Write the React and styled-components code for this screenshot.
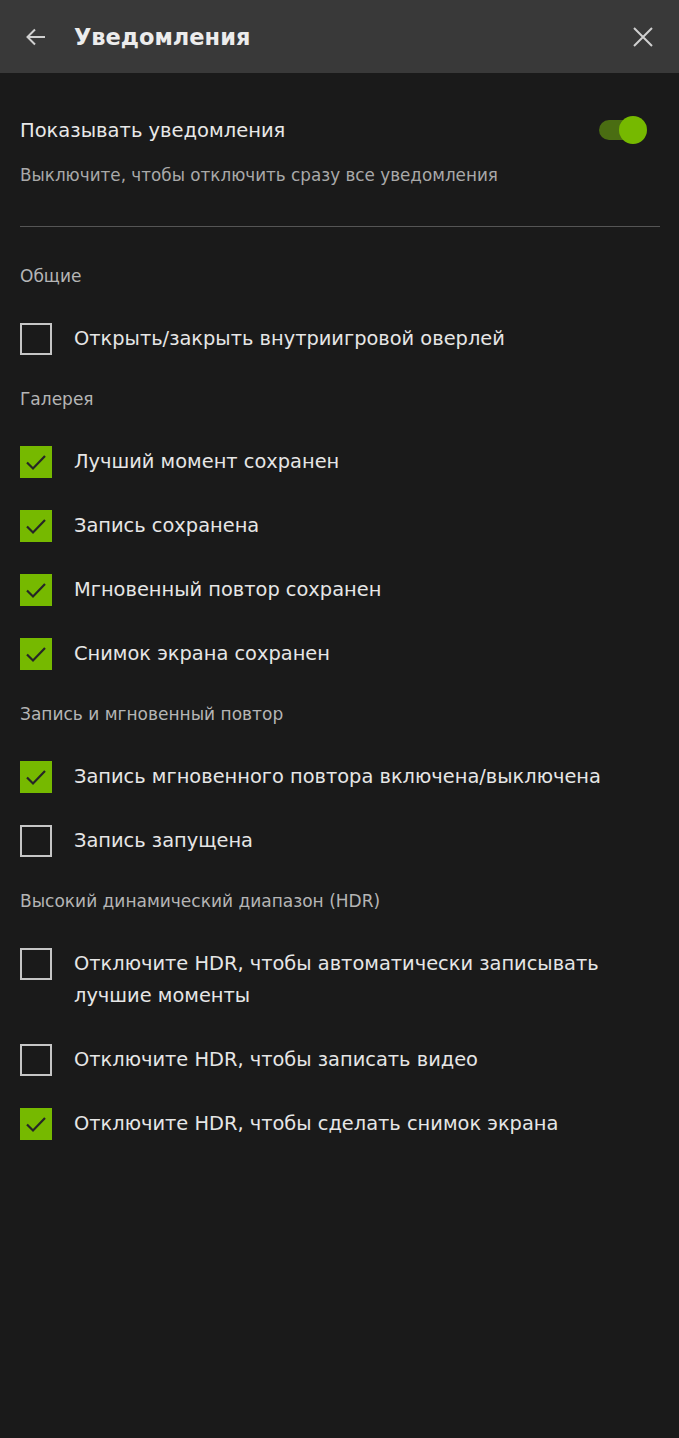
import React, { useState } from 'react';
import styled, { createGlobalStyle } from 'styled-components';

const GlobalStyle = createGlobalStyle`
  html, body {
    margin: 0;
    padding: 0;
    background: #1a1a1a;
  }
  body {
    font-family: "DejaVu Sans", "Roboto", sans-serif;
  }
`;

const Page = styled.div`
  width: 679px;
  min-height: 1438px;
  background: #1a1a1a;
  color: #e8e8e8;
  display: flex;
  flex-direction: column;
`;

const Header = styled.div`
  height: 73px;
  background: #393939;
  display: flex;
  align-items: center;
  padding: 0 24px;
  box-sizing: border-box;
`;

const IconButton = styled.button`
  background: none;
  border: none;
  padding: 0;
  width: 24px;
  height: 24px;
  display: flex;
  align-items: center;
  justify-content: center;
  color: #d0d0d0;
  cursor: pointer;
`;

const Title = styled.h1`
  margin: 0 0 0 26px;
  flex: 1;
  font-size: 22.5px;
  font-weight: 700;
  color: #ececec;
`;

const Content = styled.div`
  padding: 42px 19px 0 20px;
  display: flex;
  flex-direction: column;
`;

const MasterRow = styled.div`
  height: 30px;
  display: flex;
  align-items: center;
  justify-content: space-between;
  font-size: 19.5px;
`;

const Hint = styled.div`
  margin-top: 20px;
  font-size: 16.8px;
  line-height: 20px;
  color: #a9a9a9;
`;

const Divider = styled.hr`
  margin: 41px 0 21px;
  border: none;
  border-top: 1px solid #555;
`;

const Toggle = styled.div`
  position: relative;
  width: 48px;
  height: 28px;
  margin-right: 13px;
  display: flex;
  align-items: center;
`;

const Track = styled.div`
  width: 34px;
  height: 20px;
  border-radius: 10px;
  background: ${(p) => (p.on ? '#4a6d12' : '#555')};
`;

const Knob = styled.div`
  position: absolute;
  top: 0;
  left: ${(p) => (p.on ? '20px' : '0')};
  width: 28px;
  height: 28px;
  border-radius: 50%;
  background: ${(p) => (p.on ? '#76b900' : '#ccc')};
`;

const SectionTitle = styled.div`
  padding: 18px 0 21px;
  font-size: 17px;
  line-height: 20px;
  color: #b5b5b5;
`;

const Item = styled.label`
  display: flex;
  align-items: flex-start;
  gap: 22px;
  padding: 16px 0;
  cursor: pointer;
`;

const Box = styled.span`
  flex: 0 0 auto;
  width: 32px;
  height: 32px;
  box-sizing: border-box;
  border: ${(p) => (p.checked ? 'none' : '2px solid #c6c6c6')};
  background: ${(p) => (p.checked ? '#76b900' : 'transparent')};
  display: flex;
  align-items: center;
  justify-content: center;
`;

const Label = styled.span`
  font-size: 19.4px;
  line-height: 32px;
  color: #e6e6e6;
  max-width: 540px;
`;

const Check = () => (
  <svg width="26" height="26" viewBox="0 0 26 26" fill="none">
    <path d="M4 13.5l6 6L22 7" stroke="#262626" strokeWidth="2.2" />
  </svg>
);

const sections = [
  {
    title: 'Общие',
    items: [{ text: 'Открыть/закрыть внутриигровой оверлей', checked: false }],
  },
  {
    title: 'Галерея',
    items: [
      { text: 'Лучший момент сохранен', checked: true },
      { text: 'Запись сохранена', checked: true },
      { text: 'Мгновенный повтор сохранен', checked: true },
      { text: 'Снимок экрана сохранен', checked: true },
    ],
  },
  {
    title: 'Запись и мгновенный повтор',
    items: [
      { text: 'Запись мгновенного повтора включена/выключена', checked: true },
      { text: 'Запись запущена', checked: false },
    ],
  },
  {
    title: 'Высокий динамический диапазон (HDR)',
    items: [
      { text: 'Отключите HDR, чтобы автоматически записывать лучшие моменты', checked: false },
      { text: 'Отключите HDR, чтобы записать видео', checked: false },
      { text: 'Отключите HDR, чтобы сделать снимок экрана', checked: true },
    ],
  },
];

export default function App() {
  const [enabled, setEnabled] = useState(true);
  const [state, setState] = useState(sections);

  const toggleItem = (si, ii) => {
    setState((prev) =>
      prev.map((s, a) =>
        a !== si
          ? s
          : { ...s, items: s.items.map((it, b) => (b === ii ? { ...it, checked: !it.checked } : it)) }
      )
    );
  };

  return (
    <Page>
      <GlobalStyle />
      <Header>
        <IconButton>
          <svg width="24" height="24" viewBox="0 0 24 24" fill="none" stroke="currentColor" strokeWidth="2">
            <path d="M21 12H3.5M11 4.5L3.5 12l7.5 7.5" />
          </svg>
        </IconButton>
        <Title>Уведомления</Title>
        <IconButton>
          <svg width="22" height="22" viewBox="0 0 22 22" fill="none" stroke="currentColor" strokeWidth="2">
            <path d="M2 2l18 18M20 2L2 20" />
          </svg>
        </IconButton>
      </Header>
      <Content>
        <MasterRow>
          <span>Показывать уведомления</span>
          <Toggle onClick={() => setEnabled(!enabled)}>
            <Track on={enabled} />
            <Knob on={enabled} />
          </Toggle>
        </MasterRow>
        <Hint>Выключите, чтобы отключить сразу все уведомления</Hint>
        <Divider />
        {state.map((s, si) => (
          <div key={s.title}>
            <SectionTitle>{s.title}</SectionTitle>
            {s.items.map((it, ii) => (
              <Item key={it.text} onClick={() => toggleItem(si, ii)}>
                <Box checked={it.checked}>{it.checked && <Check />}</Box>
                <Label>{it.text}</Label>
              </Item>
            ))}
          </div>
        ))}
      </Content>
    </Page>
  );
}
